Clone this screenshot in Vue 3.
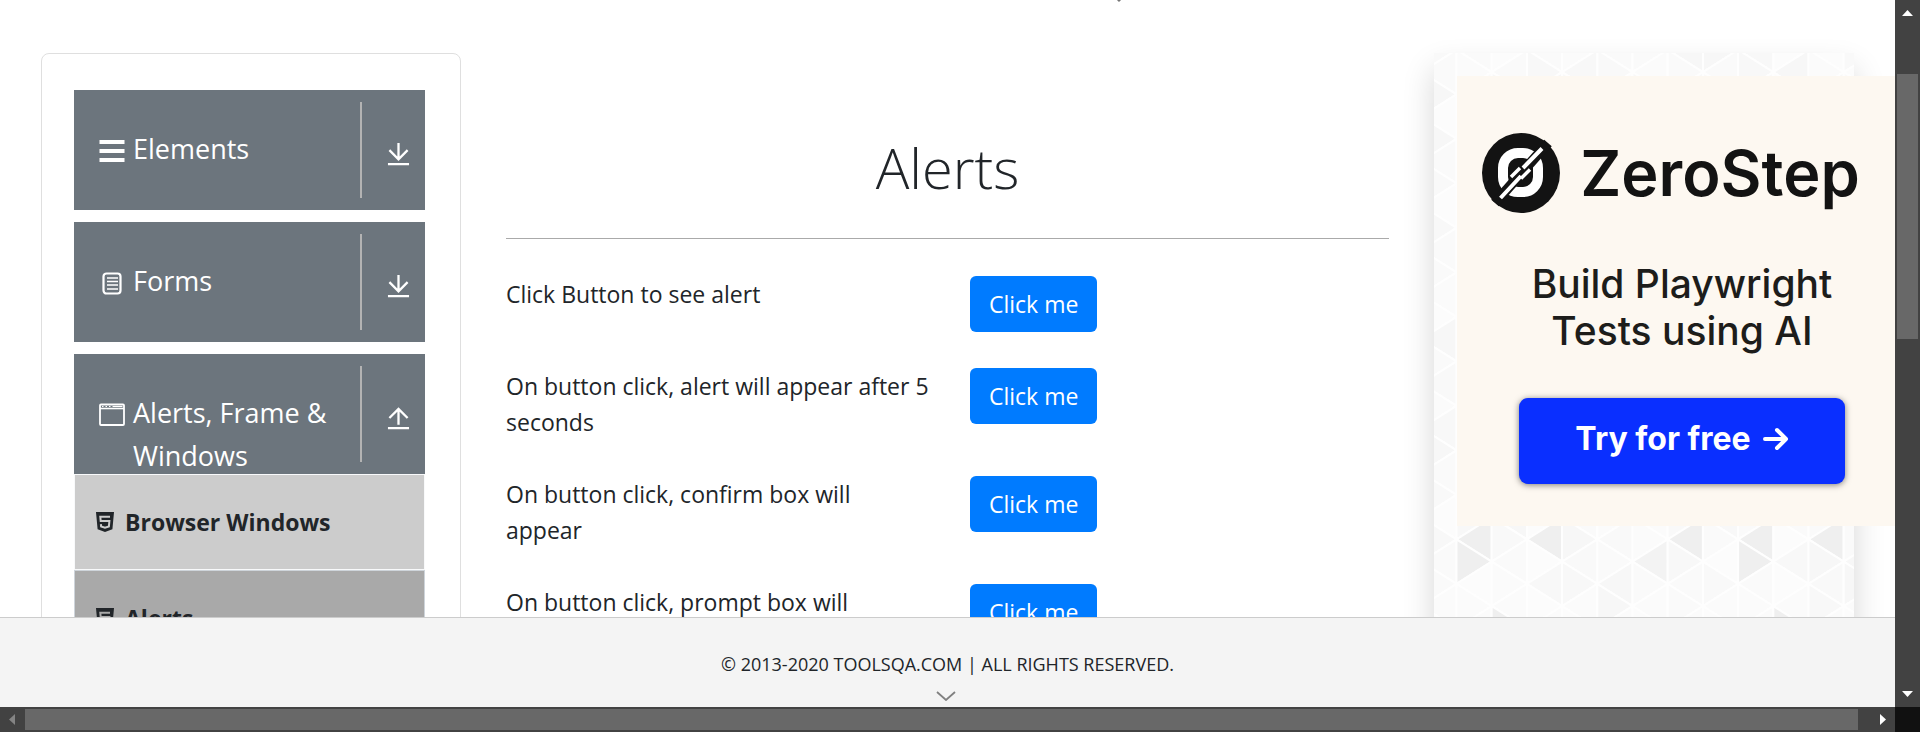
<script setup>
const groups = [
  { name: 'Elements', icon: 'bars', open: false },
  { name: 'Forms', icon: 'form', open: false },
  { name: 'Alerts, Frame & Windows', icon: 'window', open: true }
]
const links = [
  { name: 'Browser Windows', active: false },
  { name: 'Alerts', active: true }
]
const rows = [
  'Click Button to see alert',
  'On button click, alert will appear after 5 seconds',
  'On button click, confirm box will appear',
  'On button click, prompt box will appear'
]

// Triangle mosaic behind the advert
const stepX = 35.2
const stepY = 44.5
const dark = {
  '0L10': '#efefef', '0R10': '#efefef', '2L10': '#efefef', '6L10': '#efefef',
  '8L10': '#efefef', '8R10': '#efefef', '10L10': '#efefef', '5L11': '#f3f3f3',
  '1R12': '#efefef', '9R12': '#efefef', '0R11': '#fbfbfb'
}
const shades = ['#fafafa', '#fbfbfb', '#f8f8f8', '#fafafa', '#f9f9f9', '#fcfcfc', '#f7f7f7']
const triangles = []
for (let k = -1; k < 12; k++) {
  const x = 22.5 + k * stepX
  const even = k % 2 === 0
  for (let n = -2; n < 16; n++) {
    const y = (even ? 41.3 : 19.1) + n * stepY
    const a = Math.abs((k * 31 + n * 17 + k * n * 5) % 7)
    const b = Math.abs((k * 13 + n * 29 + k * n * 3) % 7)
    triangles.push({
      id: `${k}L${n}`,
      points: `${x},${y} ${x + stepX},${y - stepY / 2} ${x + stepX},${y + stepY / 2}`,
      fill: dark[`${k}L${n}`] || shades[a]
    })
    triangles.push({
      id: `${k}R${n}`,
      points: `${x},${y} ${x},${y + stepY} ${x + stepX},${y + stepY / 2}`,
      fill: dark[`${k}R${n}`] || shades[b]
    })
  }
}
</script>

<template>
  <div class="window">
    <div class="page">
      <svg class="tip" viewBox="0 0 20 4" aria-hidden="true"><path d="M7 -2 10 1 13 -2" fill="none" stroke="#777" stroke-width="1.5" /></svg>
      <div class="content">
        <aside class="sidebar">
          <section v-for="g in groups" :key="g.name" class="group">
            <button class="group-head" type="button" :aria-expanded="g.open">
              <span class="group-title">
                <svg v-if="g.icon === 'bars'" class="group-icon" viewBox="0 0 26 26" aria-hidden="true">
                  <path d="M.5 5h25M.5 14h25M.5 23h25" stroke="#fff" stroke-width="4.200" />
                </svg>
                <svg v-else-if="g.icon === 'form'" class="group-icon" viewBox="0 0 26 26" fill="none" stroke="#fff" aria-hidden="true">
                  <rect x="4.500" y="4.500" width="17" height="20" rx="3" stroke-width="2.200" />
                  <path d="M8 9h11M8 12.500h11M8 16h11M8 20h11" stroke-width="1.300" />
                </svg>
                <svg v-else class="group-icon" viewBox="0 0 26 26" fill="none" stroke="#fff" aria-hidden="true">
                  <rect x="1" y="3.500" width="24" height="20.500" rx="1" stroke-width="1.800" />
                  <path d="M1 7.500h24" stroke-width="1.600" />
                  <path d="M3 5.500h1.500M6.500 5.500h1.500M10 5.500h1.500M13.500 5.500h10" stroke-width="1" />
                </svg>
                <span>{{ g.name }}</span>
              </span>
              <span class="toggle">
                <svg viewBox="0 0 24 26" fill="none" stroke="#fff" stroke-width="2.400" aria-hidden="true">
                  <path v-if="g.open" d="M12 19.500V3M2.500 12.500 12 3l9.500 9.500M1 23h22" />
                  <path v-else d="M12 1v17M2.500 8.500 12 18l9.500-9.500M1 23h22" />
                </svg>
              </span>
            </button>
            <ul v-if="g.open" class="links">
              <li v-for="l in links" :key="l.name">
                <a href="#" :class="{ active: l.active }">
                  <svg viewBox="0 0 18 20" aria-hidden="true">
                    <path d="M0 0h18l-1.600 17.300L9 20l-7.400-2.700z" fill="#212529" />
                    <path d="M14 4.800H4.300l.4 4.200h8.700l-.5 5.400L9 15.700l-3.900-1.300-.2-2.200" fill="none" stroke="currentColor" class="five" stroke-width="2" />
                  </svg>
                  <span>{{ l.name }}</span>
                </a>
              </li>
            </ul>
          </section>
        </aside>

        <main class="main">
          <h1>Alerts</h1>
          <div v-for="r in rows" :key="r" class="row">
            <span>{{ r }}</span>
            <button type="button" class="click" :aria-label="'Click me: ' + r">Click me</button>
          </div>
        </main>

        <aside class="panel">
          <svg class="mosaic" aria-hidden="true">
            <polygon v-for="t in triangles" :key="t.id" :points="t.points" :fill="t.fill" stroke="#fefefe" stroke-width="2" />
          </svg>
          <div class="advert">
            <div class="brand">
              <svg viewBox="0 0 78 80" aria-hidden="true">
                <ellipse cx="39" cy="40" rx="39" ry="40" fill="#131313" />
                <rect x="21" y="20" width="35" height="39" rx="15" fill="none" stroke="#fff" stroke-width="10" />
                <path d="M13 70 66 10" stroke="#131313" stroke-width="10" />
                <path d="M18.500 65 39 43M60 15.500 41 35" fill="none" stroke="#fff" stroke-width="4" />
                <path d="M29 44 38 35M39 45.500l9-9" fill="none" stroke="#fff" stroke-width="3.500" />
              </svg>
              <span>ZeroStep</span>
            </div>
            <p>Build Playwright<br>Tests using AI</p>
            <a class="cta" href="#">
              <span>Try for free</span>
              <svg viewBox="0 0 26 24" fill="none" stroke="#fff" stroke-width="4" stroke-linecap="round" stroke-linejoin="round" aria-hidden="true"><path d="M2 12h21M14 3l9 9-9 9" /></svg>
            </a>
          </div>
        </aside>
      </div>

      <footer class="footer">
        <span>© 2013-2020 TOOLSQA.COM | ALL RIGHTS RESERVED.</span>
        <svg viewBox="0 0 20 10" aria-hidden="true"><path d="M1 1l9 8 9-8" fill="none" stroke="#808080" stroke-width="1.800" /></svg>
      </footer>
    </div>

    <div class="bar bar-v" aria-hidden="true">
      <svg viewBox="0 0 11 6"><path d="M0 6h11L5.500 0z" fill="#fff" /></svg>
      <div class="track"><i class="gap-top"></i><i class="thumb thumb-v"></i><i class="gap-bottom"></i></div>
      <svg viewBox="0 0 11 6"><path d="M0 0h11L5.500 6z" fill="#fff" /></svg>
    </div>
    <div class="bar bar-h" aria-hidden="true">
      <svg viewBox="0 0 6 11"><path d="M6 0v11L0 5.500z" fill="#848484" /></svg>
      <div class="track"><i class="thumb thumb-h"></i><i class="gap-right"></i></div>
      <svg viewBox="0 0 6 11"><path d="M0 0v11l6-5.500z" fill="#fff" /></svg>
    </div>
    <div class="corner"></div>
  </div>
</template>

<style>
body {
  overflow: hidden;
}
</style>

<style scoped>
* {
  box-sizing: border-box;
}
.window {
  display: grid;
  grid-template-columns: minmax(0, 1fr) 25px;
  grid-template-rows: minmax(0, 1fr) 25px;
  height: 100vh;
  color: #212529;
  background: #fff;
  font-family: "Open Sans", "Noto Sans", sans-serif;
  font-size: 23px;
  line-height: 36px;
}
button {
  font: inherit;
  border: 0;
  cursor: pointer;
}
a {
  color: inherit;
  text-decoration: none;
}
svg {
  display: block;
  flex: none;
}
.page {
  position: relative;
  display: flex;
  flex-direction: column;
  overflow: hidden;
}
.tip {
  position: absolute;
  top: 0;
  left: 58.5%;
  width: 20px;
  height: 4px;
}
.content {
  flex: 1;
  min-height: 0;
  overflow: hidden;
  display: grid;
  grid-template-columns: minmax(0, 420fr) minmax(0, 883fr) minmax(0, 420fr);
  gap: 45px;
  padding: 53px 41px 0;
}

.sidebar {
  border: 1px solid #dfdfdf;
  border-radius: 8px;
  padding: 36px 35px 0 32px;
}
.group {
  margin-bottom: 12px;
}
.group-head {
  display: flex;
  align-items: stretch;
  width: 100%;
  height: 120px;
  padding: 12px 0 12px 24px;
  background: #6c757d;
  color: #fff;
  font-size: 27px;
  line-height: 43px;
  text-align: left;
}
.group-title {
  flex: 1;
  display: flex;
  align-items: flex-start;
  gap: 8px;
  padding-top: 25px;
}
.group-icon {
  width: 26px;
  height: 26px;
  margin: 10px 0 0 1px;
}
.toggle {
  display: flex;
  align-items: center;
  width: 65px;
  padding: 8px 0 0 25px;
  border-left: 2px solid #b3b3b3;
}
.toggle svg {
  width: 23px;
  height: 25px;
}
.links {
  margin: 0;
  padding: 0;
  list-style: none;
}
.links a {
  display: flex;
  align-items: center;
  gap: 11px;
  height: 96px;
  padding: 0 21px;
  border: 1px solid #f8f9fa;
  background: #ccc;
  color: #212529;
  font-weight: 700;
}
.links a.active {
  background: #a9a9a9;
  border-color: #ced4da;
}
.links svg {
  width: 18px;
  height: 20px;
}
.five {
  color: #ccc;
}
.active .five {
  color: #a9a9a9;
}

.main h1 {
  margin: 66px 0 37px;
  height: 120px;
  border-bottom: 1px solid #aaa;
  font-size: 56px;
  line-height: 96px;
  font-weight: 300;
  text-align: center;
}
.row {
  display: grid;
  grid-template-columns: 424fr 419fr;
  gap: 40px;
  align-items: start;
  margin-bottom: 36px;
}
.click {
  justify-self: start;
  padding: 10px 19px;
  border-radius: 6px;
  background: #007bff;
  color: #fff;
}

.panel {
  position: relative;
  padding: 23px;
  background: #fafafa;
  box-shadow: 0 16px 30px rgba(0, 0, 0, 0.16);
}
.mosaic {
  position: absolute;
  inset: 0;
  width: 100%;
  height: 100%;
}
.advert {
  position: relative;
  display: flex;
  flex-direction: column;
  align-items: center;
  width: 450px;
  height: 450px;
  padding-top: 57px;
  background: #fdf8f1;
  color: #1d1d1b;
  font-family: Inter, sans-serif;
  font-weight: 600;
}
.brand {
  display: flex;
  align-items: center;
  gap: 20px;
  padding-right: 22px;
  color: #131313;
  font-size: 63px;
  line-height: 80px;
}
.brand svg {
  width: 78px;
  height: 80px;
}
.advert p {
  margin: 47px 0 0;
  font-size: 39px;
  line-height: 47px;
  font-weight: 500;
  text-align: center;
}
.cta {
  display: flex;
  align-items: center;
  justify-content: center;
  gap: 12px;
  width: 326px;
  height: 86px;
  margin-top: 44px;
  padding-bottom: 4px;
  border-radius: 9px;
  background: #0a2fff;
  box-shadow: 0 1px 6px rgba(0, 0, 0, 0.5);
  color: #fff;
  font-size: 32px;
  font-weight: 700;
}
.cta svg {
  width: 26px;
  height: 24px;
}

.footer {
  position: relative;
  display: flex;
  flex-direction: column;
  align-items: center;
  height: 90px;
  padding-top: 28px;
  border-top: 1px solid #ccc;
  background: #f4f4f4;
  font-size: 18px;
}
.footer svg {
  width: 20px;
  height: 10px;
  margin: 9px 4px 0 0;
}

.bar {
  display: flex;
  align-items: center;
  background: #424242;
}
.bar-v {
  flex-direction: column;
  padding: 10px 0;
}
.bar-h {
  padding: 0 9px;
}
.bar-v > svg {
  width: 11px;
  height: 6px;
}
.bar-h > svg {
  width: 6px;
  height: 11px;
}
.track {
  flex: 1;
  display: flex;
}
.bar-v .track {
  flex-direction: column;
  margin: 9px 0;
}
.bar-h .track {
  margin: 0 10px;
}
.thumb {
  background: #686868;
}
.gap-top {
  flex: 49;
}
.thumb-v {
  flex: 265;
  width: 21px;
}
.gap-bottom {
  flex: 343;
}
.thumb-h {
  flex: 1833;
  height: 21px;
}
.gap-right {
  flex: 12;
}
.corner {
  background: #111;
}
</style>
